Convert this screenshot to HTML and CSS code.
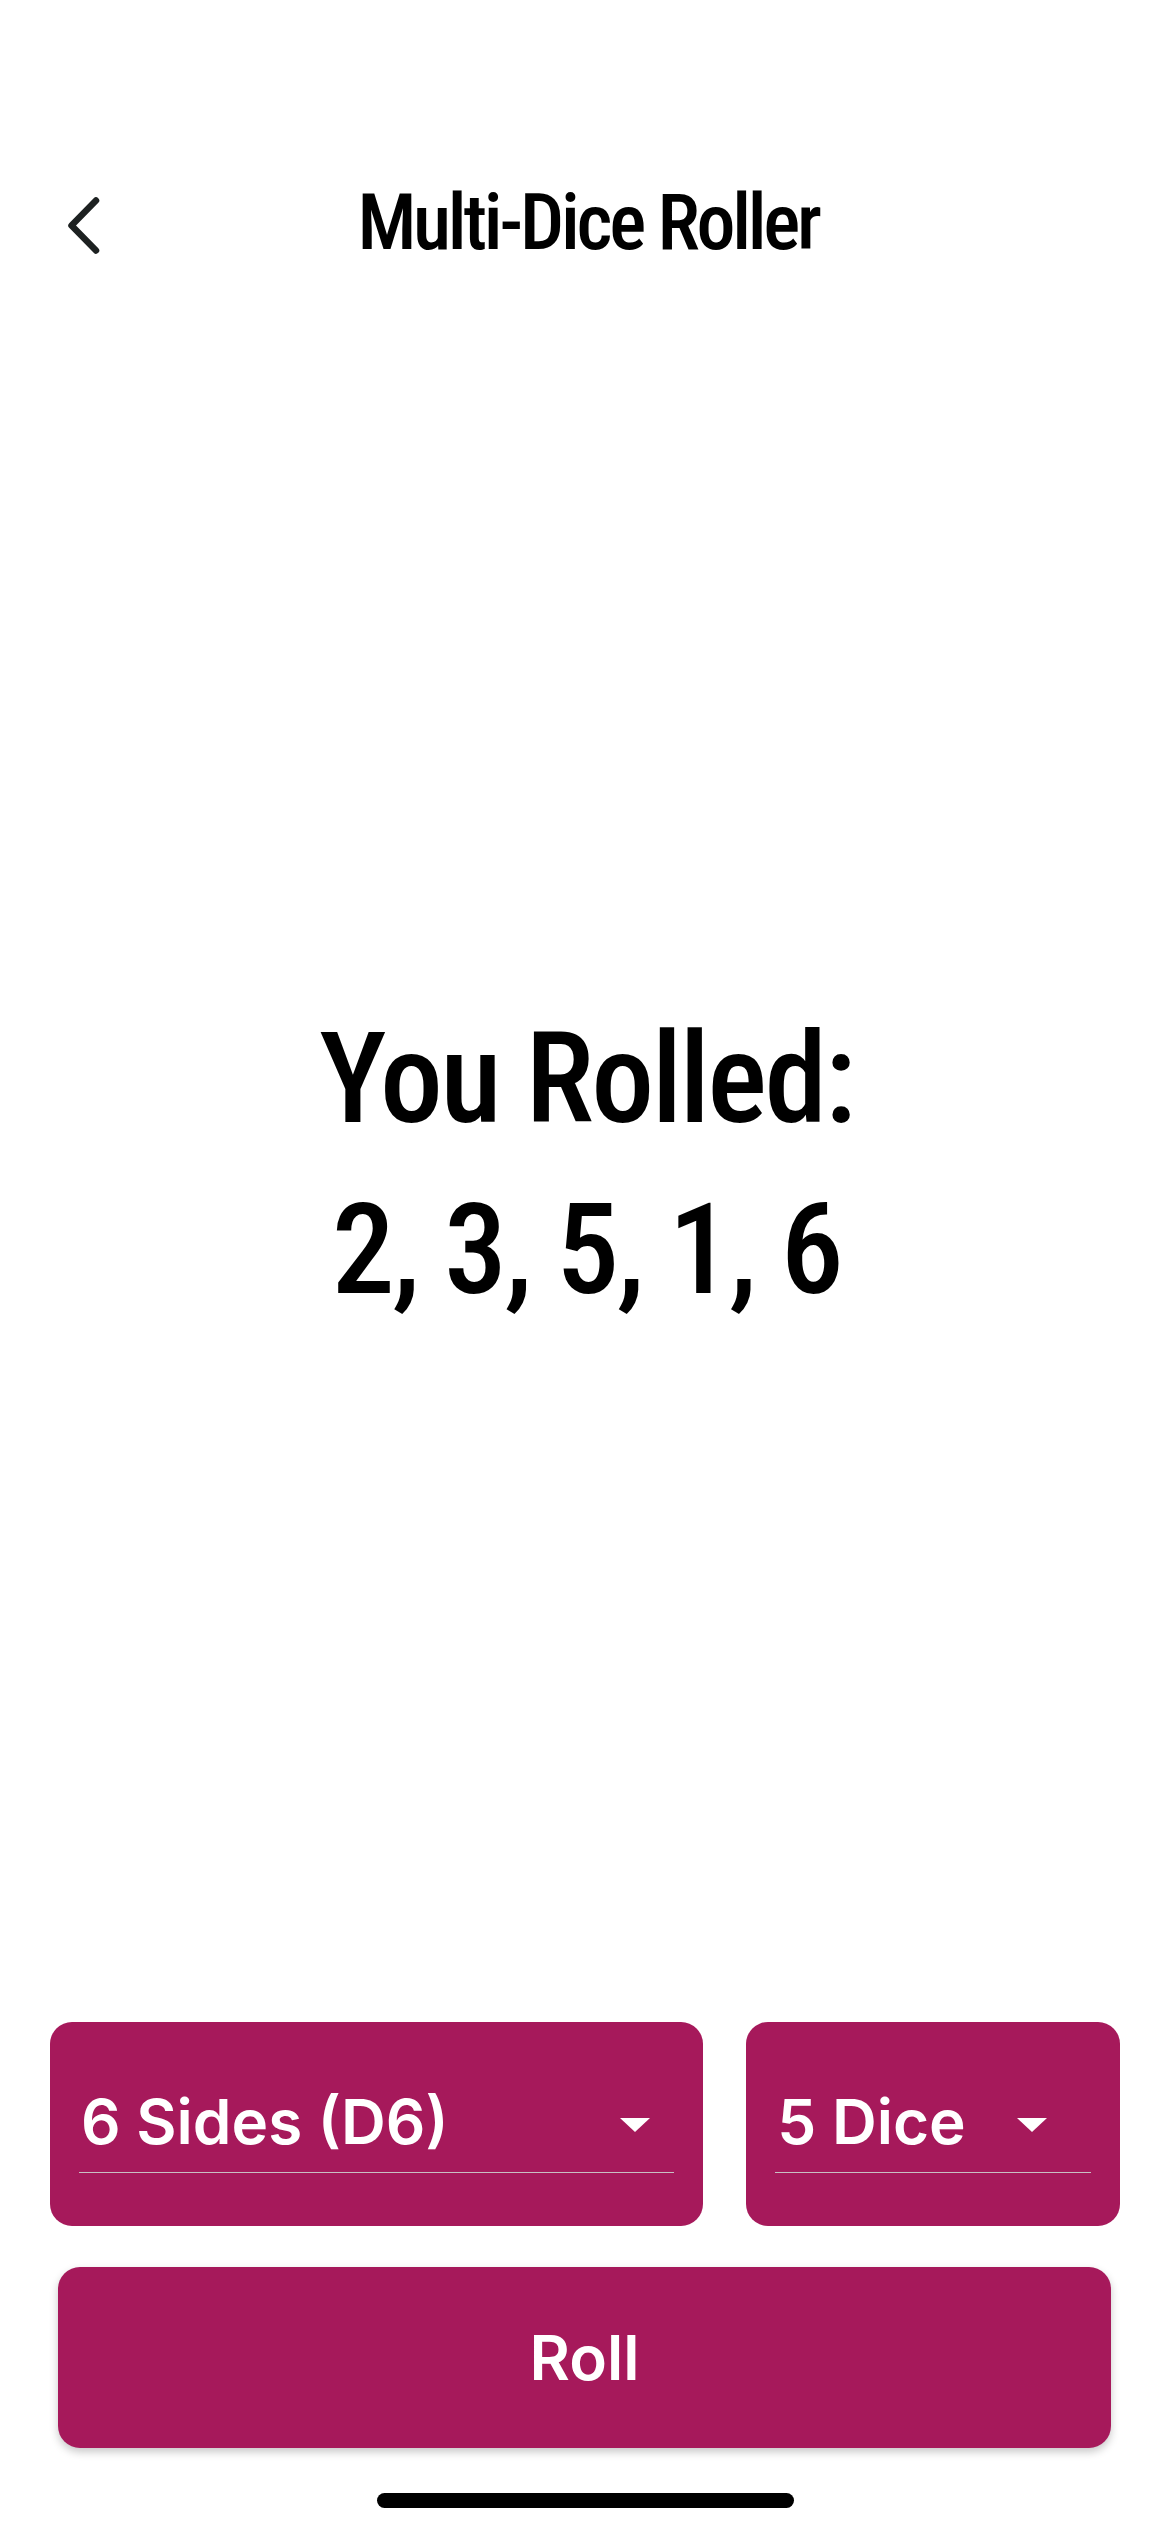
FILE: index.html
```html
<!DOCTYPE html>
<html lang="en">
<head>
<meta charset="utf-8">
<title>Multi-Dice Roller</title>
<link rel="stylesheet" href="styles.css">
</head>
<body>
<div class="screen">
  <div class="status"></div>
  <header class="nav">
    <div class="back">
      <svg viewBox="0 0 32 57" width="32" height="57" aria-hidden="true">
        <path d="M28 3.5 L3.5 28.5 L28 53.5" fill="none" stroke="#1d2121" stroke-width="6.5" stroke-linecap="round" stroke-linejoin="round"/>
      </svg>
    </div>
    <h1 class="title">Multi-Dice Roller</h1>
    <div></div>
  </header>
  <main class="result">
    <p class="result-line">You Rolled:</p>
    <p class="result-line">2, 3, 5, 1, 6</p>
  </main>
  <div class="controls">
    <div class="select select-sides">
      <div class="field">
        <span class="value">6 Sides (D6)</span>
        <span class="caret"></span>
      </div>
    </div>
    <div class="select select-count">
      <div class="field">
        <span class="value">5 Dice</span>
        <span class="caret"></span>
      </div>
    </div>
  </div>
  <button class="roll">Roll</button>
  <div class="home-indicator"></div>
</div>
</body>
</html>
```

FILE: styles.css
```css
html, body {
  margin: 0;
  padding: 0;
  background: #ffffff;
}

body {
  width: 1170px;
  height: 2532px;
  font-family: Roboto, "Liberation Sans", sans-serif;
  color: #000;
}

.screen {
  display: flex;
  flex-direction: column;
  height: 2532px;
}

.status {
  height: 150px;
  flex: none;
}

.nav {
  height: 150px;
  flex: none;
  display: grid;
  grid-template-columns: 1fr auto 1fr;
  align-items: center;
}

.back {
  display: flex;
  padding-left: 68px;
}

.back svg {
  display: block;
  width: 32px;
  height: 57px;
}

.title {
  margin: 0 0 4px 0;
  padding-left: 6px;
  font-family: "Roboto Condensed", Roboto, sans-serif;
  font-stretch: condensed;
  font-weight: 500;
  font-size: 78px;
  line-height: 1;
  letter-spacing: -3.3px;
  color: #000;
  white-space: nowrap;
}

.result {
  flex: 1;
  display: flex;
  flex-direction: column;
  align-items: center;
  justify-content: center;
  padding-top: 8px;
}

.result-line {
  margin: 0;
  padding-left: 3px;
  font-family: "Roboto Condensed", Roboto, sans-serif;
  font-stretch: condensed;
  font-weight: 500;
  font-size: 126px;
  line-height: 171px;
  letter-spacing: -2.6px;
  white-space: nowrap;
}

.controls {
  flex: none;
  display: flex;
  gap: 43px;
  padding: 0 50px 0 50px;
}

.select {
  box-sizing: border-box;
  height: 204px;
  background: #a6195b;
  border-radius: 22px;
  padding: 60px 29px 0 29px;
}

.select-sides {
  width: 654px;
}

.select-count {
  width: 374px;
}

.field {
  display: flex;
  align-items: center;
  border-bottom: 1px solid #c9c0c4;
  padding-bottom: 10px;
}

.value {
  flex: 1;
  padding-left: 2px;
  font-family: Inter, "Noto Sans", sans-serif;
  font-weight: 600;
  font-size: 62px;
  line-height: 80px;
  color: #ffffff;
  white-space: nowrap;
}

.caret {
  width: 0;
  height: 0;
  border-left: 15px solid transparent;
  border-right: 15px solid transparent;
  border-top: 14px solid #ffffff;
  margin-top: 5px;
}

.select-sides .caret {
  margin-right: 24px;
}

.select-count .caret {
  margin-right: 44px;
}

.roll {
  flex: none;
  display: flex;
  align-items: center;
  justify-content: center;
  height: 181px;
  margin: 41px 59px 0 58px;
  padding: 0;
  border: none;
  border-radius: 22px;
  background: #a6195b;
  box-shadow: 0 4px 8px rgba(0, 0, 0, 0.22);
  color: #ffffff;
  font-family: Inter, "Noto Sans", sans-serif;
  font-weight: 600;
  font-size: 62px;
  line-height: 1;
}

.home-indicator {
  flex: none;
  width: 417px;
  height: 15px;
  border-radius: 8px;
  background: #000;
  margin: 45px 0 24px 377px;
}
```
